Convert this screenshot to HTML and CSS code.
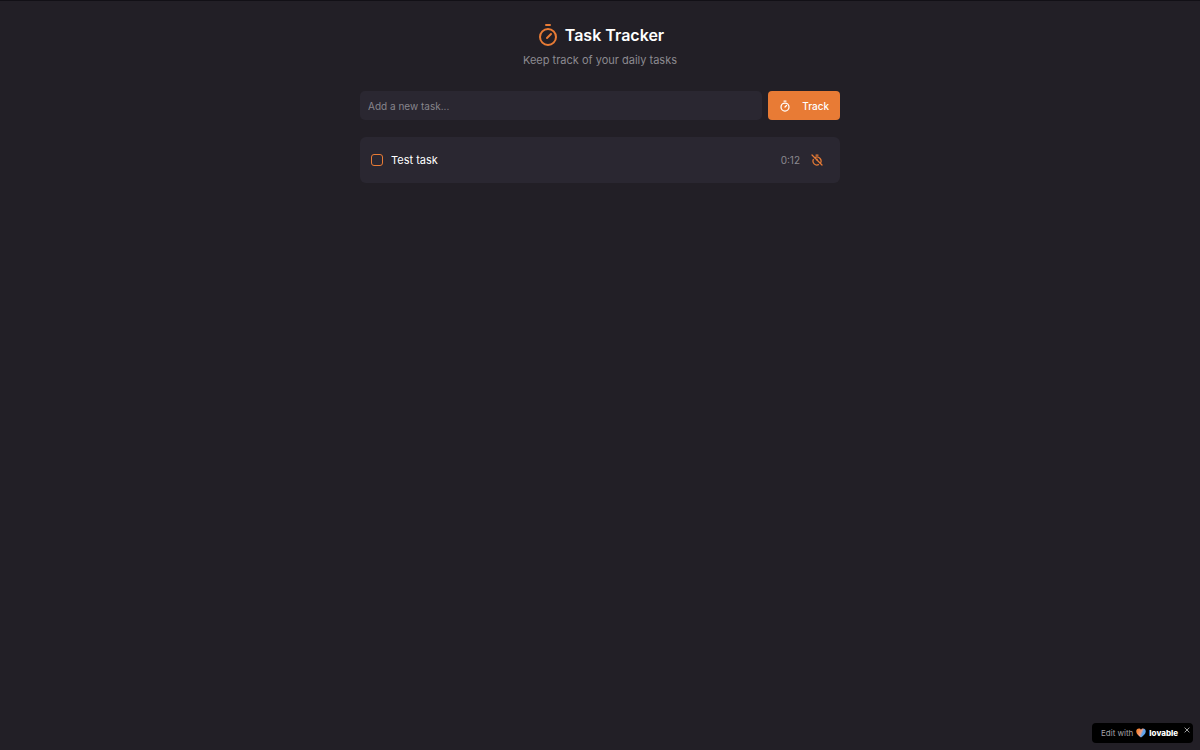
FILE: index.html
```html
<!DOCTYPE html>
<html lang="en">
<head>
    <meta charset="UTF-8">
    <meta name="viewport" content="width=device-width, initial-scale=1.0">
    <title>Task Tracker</title>
    <link rel="stylesheet" href="styles.css">
</head>
<body>

    <main class="container">
        <header class="header">
            <h1>
                <svg class="icon icon-large" viewBox="0 0 24 24" aria-hidden="true">
                    <path d="M10 2h4M11 15l4-4"/>
                    <circle cx="12" cy="14" r="8"/>
                </svg>
                Task Tracker
            </h1>
            <p>Keep track of your daily tasks</p>
        </header>

        <form class="task-form" id="taskForm">
            <input type="text" id="taskInput" placeholder="Add a new task..." aria-label="New task">
            <button type="submit" class="track-button">
                <svg class="icon" viewBox="0 0 24 24" aria-hidden="true">
                    <path d="M10 2h4M12 14l3-3"/>
                    <circle cx="12" cy="14" r="8"/>
                </svg>
                Track
            </button>
        </form>

        <ul class="task-list">
            <li class="task">
                <input type="checkbox" id="task1">
                <label for="task1">Test task</label>
                <span class="time">0:12</span>
                <button type="button" class="stop-button" aria-label="Stop timer">
                    <svg class="icon" viewBox="0 0 24 24" aria-hidden="true">
                        <path d="M10 2h4"/>
                        <path d="M4.6 11a8 8 0 0 0 1.7 8.7 8 8 0 0 0 8.7 1.7"/>
                        <path d="M7.4 7.4a8 8 0 0 1 10.3 1 8 8 0 0 1 .9 10.2"/>
                        <path d="m2 2 20 20"/>
                        <path d="M12 12v-2"/>
                    </svg>
                </button>
            </li>
        </ul>
    </main>

    <aside class="badge" id="badge">
        <a href="#">
            Edit with
            <svg class="heart" viewBox="0 0 20 20" aria-hidden="true">
                <defs>
                    <linearGradient id="heartFill" x1="0" y1="0.2" x2="1" y2="0.6">
                        <stop offset="0.2" stop-color="#f9873a"/>
                        <stop offset="0.5" stop-color="#eda08a"/>
                        <stop offset="0.7" stop-color="#5fa4ee"/>
                    </linearGradient>
                </defs>
                <path fill="url(#heartFill)" d="M6 1c2 0 3.300 1 4 2.500C10.700 2 12 1 14 1c3.500 0 5.500 2.500 5.500 6 0 5-5 8.500-9.500 12C5.500 15.500.500 12 .500 7 .500 3.500 2.500 1 6 1z"/>
            </svg>
            <strong>lovable</strong>
        </a>
        <button type="button" id="badgeClose" aria-label="Close">
            <svg viewBox="0 0 10 10" aria-hidden="true"><path d="M2 2l6 6M8 2l-6 6"/></svg>
        </button>
    </aside>

    <script>
        document.getElementById("taskForm").addEventListener("submit", function (event) {
            event.preventDefault();
        });

        document.getElementById("badgeClose").addEventListener("click", function () {
            document.getElementById("badge").remove();
        });
    </script>

</body>
</html>
```
FILE: styles.css
```css
* { box-sizing: border-box; }
body { margin: 0; min-height: 100vh; background-color: #221f26; border-top: 1px solid #121016; color: #fff; font-family: Inter, "Liberation Sans", sans-serif; }
button, input { font-family: inherit; margin: 0; }
button { border: none; cursor: pointer; }

.container { max-width: 512px; margin: 0 auto; padding: 22px 16px; }

.icon { width: 12px; height: 12px; flex: none; fill: none; stroke: currentColor; stroke-width: 2.5; stroke-linecap: round; stroke-linejoin: round; }
.icon-large { width: 24px; height: 24px; color: #e87b35; stroke-width: 2; }

.header { text-align: center; margin-bottom: 23px; }
.header h1 { display: flex; align-items: center; justify-content: center; gap: 5px; margin: 0 0 5px; font-size: 16px; line-height: 22px; font-weight: 600; }
.header p { margin: 0; font-size: 11px; line-height: 16px; color: #8c8a90; }

.task-form { display: flex; gap: 6px; margin-bottom: 17px; }
.task-form input { flex: 1; min-width: 0; height: 29px; padding: 0 8px; border: none; border-radius: 5px; background-color: #2a2731; color: #fff; font-size: 10px; }
.task-form input::placeholder { color: #87858c; opacity: 1; }
.track-button { display: flex; align-items: center; justify-content: space-between; width: 72px; height: 29px; padding: 0 11px; border-radius: 4px; background-color: #e87b35; color: #fff; font-size: 10px; font-weight: 500; }

.task-list { list-style: none; margin: 0; padding: 0; }
.task { display: flex; align-items: center; height: 46px; padding: 0 17px 0 11px; border-radius: 6px; background-color: #2a2731; }
.task input { appearance: none; width: 12px; height: 12px; border: 1px solid #e87b35; border-radius: 3px; }
.task input:checked { background-color: #e87b35; }
.task label { flex: 1; margin-left: 8px; font-size: 11px; }
.time { margin-right: 11px; font-size: 10px; color: #8c8a90; }
.stop-button { display: flex; padding: 0; background: none; color: #e87b35; }

.badge { position: fixed; right: 7px; bottom: 7px; display: flex; width: 101px; height: 20px; padding-left: 9px; border-radius: 4px; background-color: #000; }
.badge a { display: flex; align-items: center; gap: 3px; color: #a3a1a6; font-size: 8px; white-space: nowrap; text-decoration: none; }
.badge strong { color: #fff; font-size: 8px; font-weight: 800; }
.heart { width: 10px; height: 10px; }
.badge button { width: 8px; height: 8px; margin: 3px 2px 0 auto; padding: 0; background: none; }
.badge button svg { display: block; width: 8px; height: 8px; stroke: #c8c8c8; }
```
